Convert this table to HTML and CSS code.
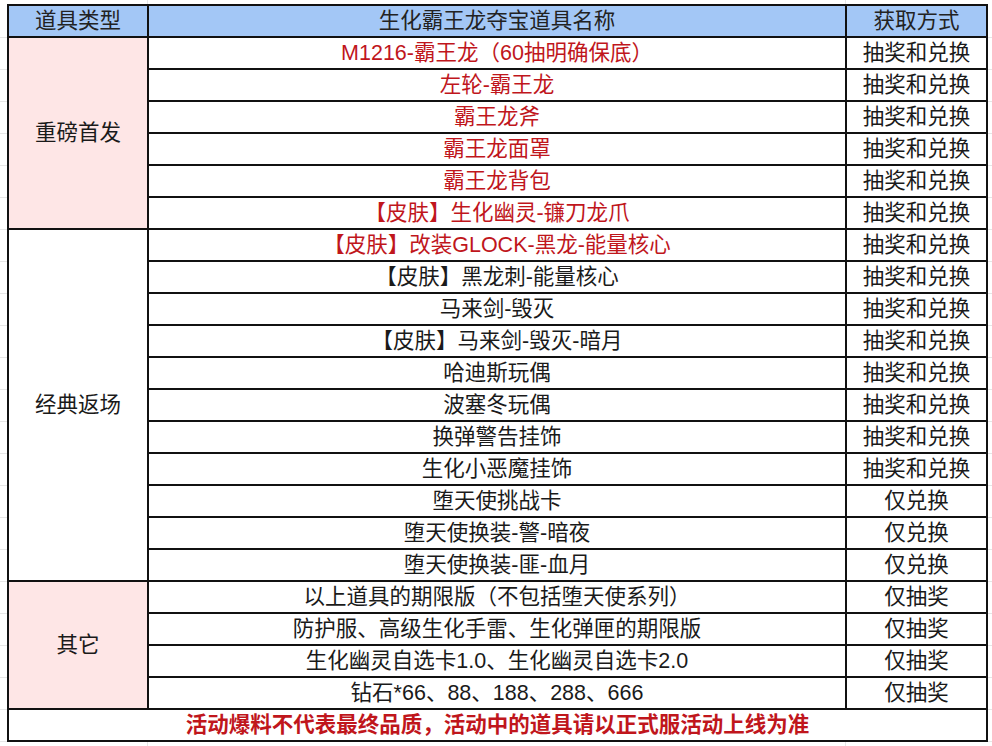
FILE: index.html
```html
<!DOCTYPE html>
<html lang="zh-CN">
<head>
<meta charset="utf-8">
<title>生化霸王龙夺宝道具</title>
<link rel="stylesheet" href="styles.css">
</head>
<body>
<table class="loot">
  <colgroup>
    <col class="c-type">
    <col class="c-name">
    <col class="c-way">
  </colgroup>
  <thead>
    <tr class="head">
      <th>道具类型</th>
      <th>生化霸王龙夺宝道具名称</th>
      <th>获取方式</th>
    </tr>
  </thead>
  <tbody>
    <tr><td class="cat pink" rowspan="6">重磅首发</td><td class="red">M1216-霸王龙（60抽明确保底）</td><td>抽奖和兑换</td></tr>
    <tr><td class="red">左轮-霸王龙</td><td>抽奖和兑换</td></tr>
    <tr><td class="red">霸王龙斧</td><td>抽奖和兑换</td></tr>
    <tr><td class="red">霸王龙面罩</td><td>抽奖和兑换</td></tr>
    <tr><td class="red">霸王龙背包</td><td>抽奖和兑换</td></tr>
    <tr><td class="red">【皮肤】生化幽灵-镰刀龙爪</td><td>抽奖和兑换</td></tr>
    <tr><td class="cat" rowspan="11">经典返场</td><td class="red">【皮肤】改装GLOCK-黑龙-能量核心</td><td>抽奖和兑换</td></tr>
    <tr><td>【皮肤】黑龙刺-能量核心</td><td>抽奖和兑换</td></tr>
    <tr><td>马来剑-毁灭</td><td>抽奖和兑换</td></tr>
    <tr><td>【皮肤】马来剑-毁灭-暗月</td><td>抽奖和兑换</td></tr>
    <tr><td>哈迪斯玩偶</td><td>抽奖和兑换</td></tr>
    <tr><td>波塞冬玩偶</td><td>抽奖和兑换</td></tr>
    <tr><td>换弹警告挂饰</td><td>抽奖和兑换</td></tr>
    <tr><td>生化小恶魔挂饰</td><td>抽奖和兑换</td></tr>
    <tr><td>堕天使挑战卡</td><td>仅兑换</td></tr>
    <tr><td>堕天使换装-警-暗夜</td><td>仅兑换</td></tr>
    <tr><td>堕天使换装-匪-血月</td><td>仅兑换</td></tr>
    <tr><td class="cat pink" rowspan="4">其它</td><td>以上道具的期限版（不包括堕天使系列）</td><td>仅抽奖</td></tr>
    <tr><td>防护服、高级生化手雷、生化弹匣的期限版</td><td>仅抽奖</td></tr>
    <tr><td>生化幽灵自选卡1.0、生化幽灵自选卡2.0</td><td>仅抽奖</td></tr>
    <tr><td>钻石*66、88、188、288、666</td><td>仅抽奖</td></tr>
    <tr><td class="note" colspan="3">活动爆料不代表最终品质，活动中的道具请以正式服活动上线为准</td></tr>
  </tbody>
</table>
</body>
</html>
```

FILE: styles.css
```css
html, body {
  margin: 0;
  padding: 0;
}

body {
  width: 992px;
  height: 746px;
  overflow: hidden;
  padding: 4px 0 0 7px;
  box-sizing: border-box;
  font-family: "Liberation Sans", "Noto Sans CJK SC", sans-serif;
  color: #1a1a1a;
  background-color: #ffffff;
  background-image:
    linear-gradient(to right, transparent 147px, #e6e6e6 147px, #e6e6e6 148px, transparent 148px),
    linear-gradient(to right, transparent 845px, #e6e6e6 845px, #e6e6e6 846px, transparent 846px),
    repeating-linear-gradient(to bottom, transparent 0, transparent 31px, #e6e6e6 31px, #e6e6e6 32px);
  background-position: 0 0, 0 0, 0 6px;
}

.loot {
  border-collapse: collapse;
  table-layout: fixed;
  width: 979px;
  background: #ffffff;
}

.c-type { width: 140px; }
.c-name { width: 698px; }
.c-way { width: 141px; }

.loot th,
.loot td {
  border: 2px solid #111111;
  height: 30px;
  padding: 0;
  text-align: center;
  vertical-align: middle;
  font-family: "Liberation Sans", "Noto Sans CJK SC", sans-serif;
  font-size: 21.5px;
  line-height: 29px;
  font-weight: 400;
  white-space: nowrap;
  color: #1a1a1a;
}

.head th {
  background: #a3c7f6;
  color: #222222;
}

.cat {
  background: #ffffff;
}

.cat.pink {
  background: #fee6e6;
}

.loot td.red {
  color: #c0161c;
}

.loot td.note {
  color: #c0161c;
  font-weight: 700;
  font-size: 21.5px;
}
```
